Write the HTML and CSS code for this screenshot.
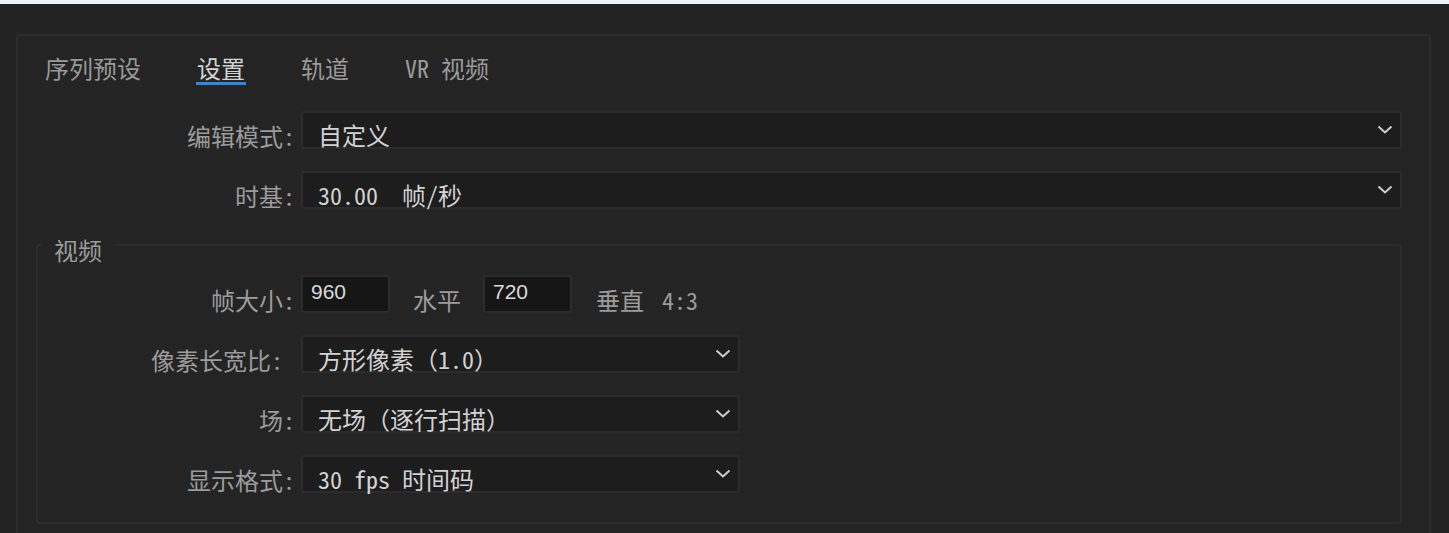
FILE: index.html
```html
<!DOCTYPE html>
<html lang="zh-CN">
<head>
<meta charset="utf-8">
<title>序列设置</title>
<link rel="stylesheet" href="styles.css">
</head>
<body>
<div class="topbar"></div>
<div class="panel">
  <nav class="tabs">
    <span class="tab">序列预设</span>
    <span class="tab active">设置</span>
    <span class="tab">轨道</span>
    <span class="tab">VR 视频</span>
  </nav>

  <div class="form form-outer">
    <span class="label">编辑模式:</span>
    <div class="select">
      <span class="value">自定义</span>
      <svg class="chev" width="16" height="9" viewBox="0 0 16 9"><polyline points="1.5,1.5 8,7.5 14.5,1.5"/></svg>
    </div>

    <span class="label">时基:</span>
    <div class="select">
      <span class="value pre">30.00  帧/秒</span>
      <svg class="chev" width="16" height="9" viewBox="0 0 16 9"><polyline points="1.5,1.5 8,7.5 14.5,1.5"/></svg>
    </div>
  </div>

  <fieldset class="group">
    <legend class="legend">视频</legend>
    <div class="form form-inner">
      <span class="label">帧大小:</span>
      <div class="size-row">
        <input class="num" type="text" value="960">
        <span class="text">水平</span>
        <input class="num" type="text" value="720">
        <span class="text">垂直</span>
        <span class="text ratio">4:3</span>
      </div>

      <span class="label label-wide">像素长宽比:</span>
      <div class="select narrow">
        <span class="value">方形像素（1.0）</span>
        <svg class="chev" width="16" height="9" viewBox="0 0 16 9"><polyline points="1.5,1.5 8,7.5 14.5,1.5"/></svg>
      </div>

      <span class="label">场:</span>
      <div class="select narrow">
        <span class="value">无场（逐行扫描）</span>
        <svg class="chev" width="16" height="9" viewBox="0 0 16 9"><polyline points="1.5,1.5 8,7.5 14.5,1.5"/></svg>
      </div>

      <span class="label">显示格式:</span>
      <div class="select narrow">
        <span class="value">30 fps 时间码</span>
        <svg class="chev" width="16" height="9" viewBox="0 0 16 9"><polyline points="1.5,1.5 8,7.5 14.5,1.5"/></svg>
      </div>
    </div>
  </fieldset>
</div>
</body>
</html>
```
FILE: styles.css
```css
html, body {
  margin: 0;
  padding: 0;
  overflow: hidden;
  background: #232323;
}
body {
  font-family: "Noto Sans Mono CJK SC", "Noto Sans CJK SC", sans-serif;
  font-size: 24px;
  line-height: 24px;
  color: #9b9b9b;
}
.topbar {
  height: 4px;
  background: #eef5fa;
}
.panel {
  margin: 30px 18px 0 16px;
  min-height: 560px;
  border: 2px solid #2d2d2d;
  border-bottom: none;
  border-radius: 4px 4px 0 0;
  background: #242424;
  padding: 20px 27px 0 0;
}
.tabs {
  display: flex;
  gap: 54px;
  margin-left: 26px;
}
.tab {
  padding: 0 1px 2px;
  border-bottom: 3px solid transparent;
  color: #999999;
}
.tab.active {
  color: #d4d4d4;
  border-bottom-color: #2d88e2;
}
.form {
  display: grid;
  column-gap: 6px;
  row-gap: 22px;
  align-items: center;
}
.form-outer {
  grid-template-columns: 277px 1fr;
  margin-top: 26px;
}
.form-inner {
  grid-template-columns: 257px 1fr;
}
.label {
  text-align: right;
  padding-top: 11px;
  white-space: nowrap;
}
.label-wide {
  padding-right: 12px;
}
.select {
  display: flex;
  align-items: center;
  height: 38px;
  box-sizing: border-box;
  border: 2px solid #2c2c2c;
  border-radius: 3px;
  background: #1d1d1d;
  padding: 0 7px 0 15px;
}
.select.narrow {
  width: 439px;
}
.value {
  flex: 1;
  padding-top: 10px;
  color: #d2d2d2;
  white-space: nowrap;
}
.pre {
  white-space: pre;
}
.chev {
  margin-bottom: 2px;
  fill: none;
  stroke: #cfcfcf;
  stroke-width: 2;
}
.group {
  margin: 19px 0 0 18px;
  padding: 13px 0 29px 0;
  border: 2px solid #2d2d2d;
  border-radius: 4px;
  min-width: 0;
}
.legend {
  margin-left: 3px;
  padding: 10px 14px 0 13px;
  color: #9b9b9b;
}
.size-row {
  display: flex;
  align-items: center;
  height: 38px;
}
.num {
  width: 89px;
  height: 38px;
  box-sizing: border-box;
  margin: 0;
  border: 2px solid #2c2c2c;
  border-radius: 3px;
  background: #161616;
  color: #dadada;
  font-family: "Liberation Sans", sans-serif;
  font-size: 21px;
  padding: 0 8px 5px 8px;
  outline: none;
}
.num + .text {
  margin-left: 23px;
}
.text + .num {
  margin-left: 22px;
}
.text {
  padding-top: 12px;
}
.num + .text + .num + .text {
  margin-left: 24px;
}
.ratio {
  margin-left: 18px;
}
```
